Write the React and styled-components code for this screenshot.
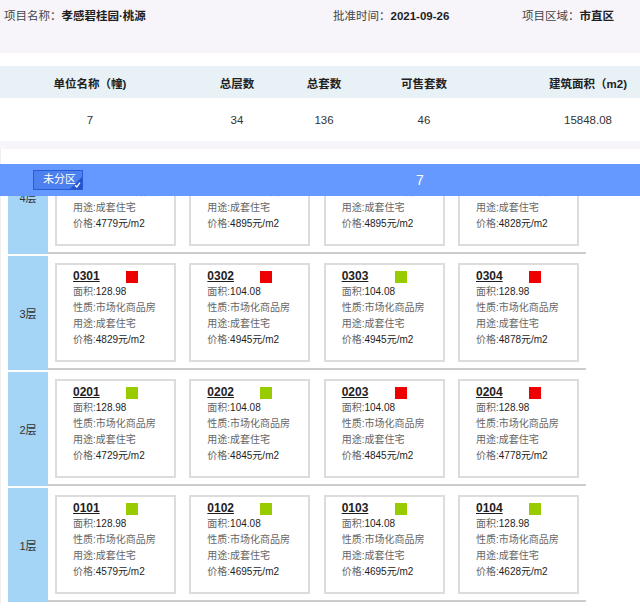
import React from "react";
import styled, { createGlobalStyle } from "styled-components";

const GlobalStyle = createGlobalStyle`
  html, body {
    margin: 0;
    padding: 0;
    background: #ffffff;
  }
  body {
    width: 640px;
    height: 612px;
    overflow: hidden;
    font-family: "Liberation Sans", "Noto Sans CJK SC", sans-serif;
    color: #333333;
  }
`;

const Page = styled.div`
  width: 640px;
  overflow: hidden;
`;

const InfoBar = styled.div`
  display: grid;
  grid-template-columns: 329px 189px 1fr;
  height: 53px;
  padding-left: 4px;
  background: #f7f4fa;
  font-size: 11.5px;
  line-height: 14px;
`;

const InfoItem = styled.div`
  padding-top: 9px;
  white-space: nowrap;
  color: #444444;
`;

const InfoValue = styled.span`
  font-weight: bold;
  color: #1e1e1e;
`;

const Summary = styled.div`
  margin-top: 13px;
  overflow: hidden;
`;

const SummaryRow = styled.div`
  display: grid;
  grid-template-columns: 180px 114px 60px 140px 188px;
  width: 682px;
  height: ${(p) => (p.$head ? "32px" : "43px")};
  align-items: center;
  background: ${(p) => (p.$head ? "#e8f1f6" : "#ffffff")};
  font-size: 11.5px;
  font-weight: ${(p) => (p.$head ? "bold" : "normal")};
  color: ${(p) => (p.$head ? "#222222" : "#333333")};
`;

const SummaryCell = styled.div`
  text-align: center;
  white-space: nowrap;
  padding-top: ${(p) => (p.$head ? "2px" : "0")};
`;

const Divider = styled.div`
  height: 8px;
  background: #f7f4fa;
`;

const Panel = styled.div`
  padding-top: 15px;
  border-left: 1px solid #eeeeee;
`;

const Viewport = styled.div`
  overflow: hidden;
  margin-left: -1px;
`;

const BuildingBar = styled.div`
  position: relative;
  z-index: 2;
  display: grid;
  grid-template-columns: 200px 1fr;
  align-items: center;
  height: 32px;
  background: #6699ff;
`;

const ZoneCell = styled.div`
  padding-left: 33px;
  display: flex;
  align-items: center;
`;

const ZoneButton = styled.div`
  position: relative;
  box-sizing: border-box;
  width: 50px;
  height: 20px;
  padding-left: 9px;
  border: 1.5px solid #2a5bd6;
  background: #4d80ef;
  color: #ffffff;
  font-size: 11px;
  line-height: 17px;
`;

const CornerMark = styled.svg`
  position: absolute;
  right: 0;
  bottom: 0;
`;

const BuildingTitle = styled.div`
  text-align: center;
  color: #ffffff;
  font-size: 14px;
`;

const Floors = styled.div`
  position: relative;
  z-index: 1;
  margin: -56px 0 0 8px;
  width: 578px;
`;

const FloorRow = styled.div`
  display: flex;
  height: 114px;
  margin-bottom: 2px;
`;

const FloorLabel = styled.div`
  width: 40px;
  flex: none;
  display: flex;
  align-items: center;
  justify-content: center;
  background: #a4d4f6;
  font-size: 11px;
  color: #333333;
`;

const Units = styled.div`
  flex: 1;
  box-sizing: border-box;
  display: flex;
  justify-content: space-between;
  padding: 7px 7px 0 7px;
  border-bottom: 2px solid #cccccc;
`;

const UnitCard = styled.div`
  box-sizing: border-box;
  width: 121px;
  height: 99px;
  padding: 3px 0 0 16px;
  border: 2px solid #dcdcdc;
  background: #ffffff;
  font-size: 10px;
  line-height: 16px;
  color: #666666;
  white-space: nowrap;
`;

const UnitHead = styled.div`
  display: flex;
  align-items: center;
`;

const UnitCode = styled.span`
  width: 53px;
  font-size: 12px;
  font-weight: bold;
  color: #1e1e1e;
  text-decoration: underline;
`;

const StatusBox = styled.span`
  width: 12px;
  height: 12px;
  margin-top: 1px;
  background: ${(p) => (p.$sold ? "#ee0000" : "#99cc00")};
`;

const Strong = styled.span`
  color: #1e1e1e;
`;

const floors = [
  {
    name: "4层",
    units: [
      ["0401", true, "128.98", "4779"],
      ["0402", false, "104.08", "4895"],
      ["0403", false, "104.08", "4895"],
      ["0404", true, "128.98", "4828"],
    ],
  },
  {
    name: "3层",
    units: [
      ["0301", true, "128.98", "4829"],
      ["0302", true, "104.08", "4945"],
      ["0303", false, "104.08", "4945"],
      ["0304", true, "128.98", "4878"],
    ],
  },
  {
    name: "2层",
    units: [
      ["0201", false, "128.98", "4729"],
      ["0202", false, "104.08", "4845"],
      ["0203", true, "104.08", "4845"],
      ["0204", true, "128.98", "4778"],
    ],
  },
  {
    name: "1层",
    units: [
      ["0101", false, "128.98", "4579"],
      ["0102", false, "104.08", "4695"],
      ["0103", false, "104.08", "4695"],
      ["0104", false, "128.98", "4628"],
    ],
  },
];

const summaryHead = ["单位名称（幢)", "总层数", "总套数", "可售套数", "建筑面积（m2)"];
const summaryData = ["7", "34", "136", "46", "15848.08"];

const App = () => {
  return (
    <Page>
      <GlobalStyle />
      <InfoBar>
        <InfoItem>
          项目名称：<InfoValue>孝感碧桂园·桃源</InfoValue>
        </InfoItem>
        <InfoItem>
          批准时间：<InfoValue>2021-09-26</InfoValue>
        </InfoItem>
        <InfoItem>
          项目区域：<InfoValue>市直区</InfoValue>
        </InfoItem>
      </InfoBar>

      <Summary>
        <SummaryRow $head>
          {summaryHead.map((t) => (
            <SummaryCell $head key={t}>
              {t}
            </SummaryCell>
          ))}
        </SummaryRow>
        <SummaryRow>
          {summaryData.map((t) => (
            <SummaryCell key={t}>{t}</SummaryCell>
          ))}
        </SummaryRow>
      </Summary>
      <Divider />

      <Panel>
        <Viewport>
          <BuildingBar>
            <ZoneCell>
              <ZoneButton>
                未分区
                <CornerMark width="12" height="12" viewBox="0 0 12 12">
                  <path d="M12 0 L12 12 L0 12 Z" fill="#2453c9" />
                  <path
                    d="M5 8.2 L6.8 10 L10 5.6"
                    fill="none"
                    stroke="#ffffff"
                    strokeWidth="1.4"
                  />
                </CornerMark>
              </ZoneButton>
            </ZoneCell>
            <BuildingTitle>7</BuildingTitle>
          </BuildingBar>

          <Floors>
            {floors.map((f) => (
              <FloorRow key={f.name}>
                <FloorLabel>{f.name}</FloorLabel>
                <Units>
                  {f.units.map(([code, sold, area, price]) => (
                    <UnitCard key={code}>
                      <UnitHead>
                        <UnitCode>{code}</UnitCode>
                        <StatusBox $sold={sold} />
                      </UnitHead>
                      <div>
                        面积:<Strong>{area}</Strong>
                      </div>
                      <div>性质:市场化商品房</div>
                      <div>用途:成套住宅</div>
                      <div>
                        价格:<Strong>{price}元/m2</Strong>
                      </div>
                    </UnitCard>
                  ))}
                </Units>
              </FloorRow>
            ))}
          </Floors>
        </Viewport>
      </Panel>
    </Page>
  );
};

export default App;
